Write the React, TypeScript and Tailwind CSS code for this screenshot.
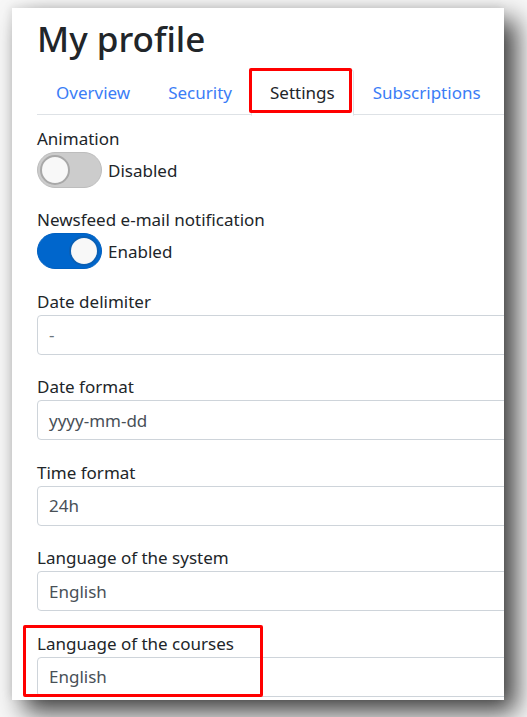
import React from "react";

function Toggle({ on, label }: { on: boolean; label: string }) {
  return (
    <div className="flex items-center h-[36px]">
      <div
        className={
          "relative w-[65px] h-[36px] rounded-full border " +
          (on ? "bg-[#0066cc] border-[#0060c0]" : "bg-[#cccccc] border-[#bdbdbd]")
        }
      >
        <div
          className={
            "absolute top-[2px] w-[30px] h-[30px] rounded-full bg-[#f8f8f8] border-2 " +
            (on ? "right-[2px] border-[#0a5fb4]" : "left-[2px] border-[#a8a8a8]")
          }
        />
      </div>
      <span className="ml-[6px] text-[17px] leading-[27px] text-[#212529]">{label}</span>
    </div>
  );
}

function Field({ label, value, faint }: { label: string; value: string; faint?: boolean }) {
  return (
    <div className="mt-[18.5px]">
      <div className="text-[17px] leading-[27px] text-[#212529]">{label}</div>
      <div className="w-[540px] h-[40px] border border-[#ced4da] rounded-[4px] pl-[11px] flex items-center">
        <span className={"text-[17px] leading-[27px] " + (faint ? "text-[#6c757d]" : "text-[#495057]")}>{value}</span>
      </div>
    </div>
  );
}

export default function App() {
  const tabs = ["Overview", "Security", "Settings", "Subscriptions"];
  return (
    <div
      className="relative w-[527px] h-[717px] overflow-hidden bg-[#f7f7f7] pl-[12px] pt-[8px]"
      style={{ fontFamily: '"Noto Sans", "Open Sans", sans-serif' }}
    >
      <div className="w-[492px] h-[692px] bg-white overflow-hidden shadow-[12px_12px_24px_rgba(0,0,0,0.75),-2px_-2px_8px_rgba(0,0,0,0.07)]">
        <div className="w-[540px] pl-[25px] pt-[8px]">
          <h1 className="text-[35px] leading-[46px] font-medium text-[#212529] mb-[7px]">My profile</h1>
          <div className="flex border-b border-[#dee2e6] h-[46px]">
            {tabs.map((t) => {
              const active = t === "Settings";
              return (
                <div
                  key={t}
                  className={
                    "px-[18px] pt-[9px] h-[47px] border text-[17px] leading-[27px] rounded-t-[4px] " +
                    (active
                      ? "border-[#dee2e6] border-b-white bg-white text-[#212529]"
                      : "border-transparent text-[#3b7df6]")
                  }
                >
                  {t}
                </div>
              );
            })}
          </div>
          <div className="pt-[10px]">
            <div className="text-[17px] leading-[27px] text-[#212529]">Animation</div>
            <Toggle on={false} label="Disabled" />
            <div className="mt-[18px] text-[17px] leading-[27px] text-[#212529]">Newsfeed e-mail notification</div>
            <Toggle on={true} label="Enabled" />
            <Field label="Date delimiter" value="-" faint />
            <Field label="Date format" value="yyyy-mm-dd" />
            <Field label="Time format" value="24h" />
            <Field label="Language of the system" value="English" />
            <Field label="Language of the courses" value="English" />
          </div>
        </div>
      </div>
      <div className="absolute left-[249px] top-[68px] w-[103px] h-[45px] border-[3px] border-[#ff0000] rounded-[2px]" />
      <div className="absolute left-[23px] top-[625px] w-[240px] h-[72px] border-[3px] border-[#ff0000] rounded-[2px]" />
    </div>
  );
}
